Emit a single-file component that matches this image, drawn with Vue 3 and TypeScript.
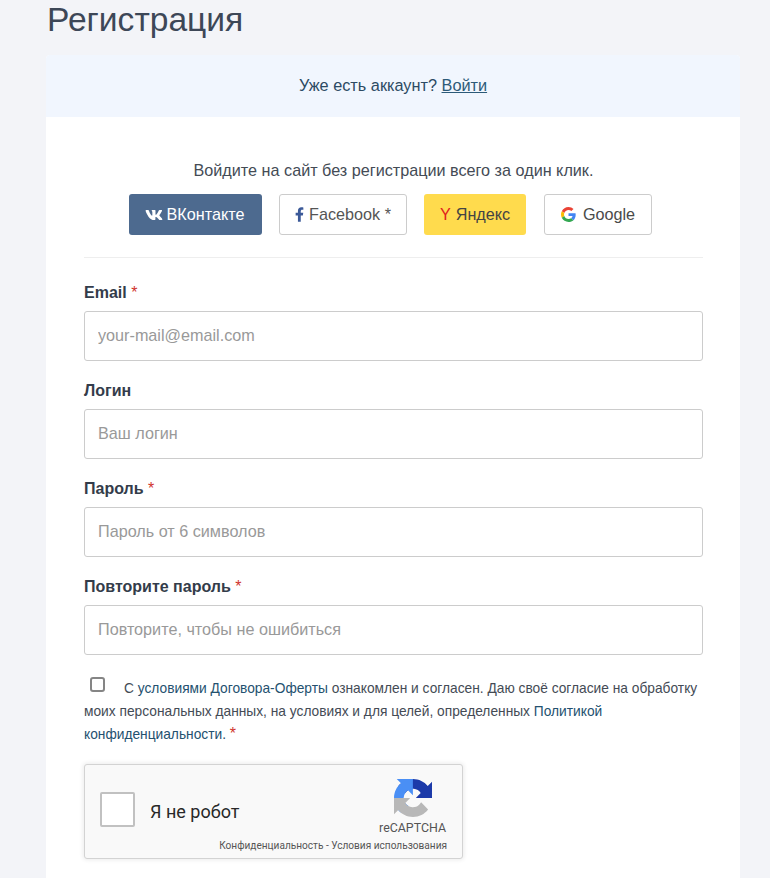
<script setup lang="ts">
interface Field {
  label: string;
  placeholder: string;
  required: boolean;
}

const fields: Field[] = [
  { label: "Email", placeholder: "your-mail@email.com", required: true },
  { label: "Логин", placeholder: "Ваш логин", required: false },
  { label: "Пароль", placeholder: "Пароль от 6 символов", required: true },
  { label: "Повторите пароль", placeholder: "Повторите, чтобы не ошибиться", required: true },
];
</script>

<template>
  <main class="page">
    <h1 class="title">Регистрация</h1>
    <section class="card">
      <header class="notice">Уже есть аккаунт? <a href="#" class="login">Войти</a></header>
      <div class="body">
        <p class="social-lead">Войдите на сайт без регистрации всего за один клик.</p>
        <div class="social">
          <a href="#" class="btn btn-vk">
            <svg class="ico-vk" viewBox="0 0 576 512" aria-hidden="true"><path fill="#fff" d="M545 117.7c3.7-12.5 0-21.7-17.8-21.7h-58.9c-15 0-21.9 7.9-25.6 18.9 0 0-29.4 68.8-71 113.3-13.4 13.4-19.6 17.7-26.9 17.7-3.7 0-9.2-4.3-9.2-16.8V117.7c0-15-4.2-21.7-16.6-21.7h-92.6c-9.4 0-15 7-15 13.5 0 14.2 21.2 17.5 23.4 57.5v86.8c0 19-3.4 22.5-10.9 22.5-20 0-68.6-73.4-97.4-157.4-5.8-16.3-11.5-22.9-26.6-22.9H38.8c-16.8 0-20.2 7.9-20.2 16.7 0 15.6 20 93.1 93.1 195.5C160.4 378.1 229 416 291.4 416c37.5 0 42.1-8.4 42.1-22.9 0-66.8-3.4-73.1 15.4-73.1 8.7 0 23.7 4.4 58.7 38.1 40 40 46.6 57.9 69 57.9h58.9c16.8 0 25.3-8.4 20.4-25-11.2-34.9-86.9-106.7-90.3-111.5-8.7-11.2-6.2-16.2 0-26.2.1-.1 72-101.3 79.4-135.6z"/></svg>
            <span>ВКонтакте</span>
          </a>
          <a href="#" class="btn btn-line btn-fb">
            <svg class="ico-fb" viewBox="0 0 320 512" aria-hidden="true"><path fill="#3b5998" d="M279.14 288l14.22-92.66h-88.91v-60.13c0-25.35 12.42-50.06 52.24-50.06h40.42V6.26S260.43 0 225.36 0c-73.22 0-121.08 44.38-121.08 124.72v70.62H22.89V288h81.39v224h100.17V288z"/></svg>
            <span>Facebook *</span>
          </a>
          <a href="#" class="btn btn-ya"><span class="ya-y">Y</span><span>Яндекс</span></a>
          <a href="#" class="btn btn-line btn-google">
            <svg class="ico-g" viewBox="0 0 48 48" aria-hidden="true">
              <path fill="#EA4335" d="M24 9.5c3.54 0 6.71 1.22 9.21 3.6l6.85-6.85C35.9 2.38 30.47 0 24 0 14.62 0 6.51 5.38 2.56 13.22l7.98 6.19C12.43 13.72 17.74 9.5 24 9.5z"/>
              <path fill="#4285F4" d="M46.98 24.55c0-1.57-.15-3.09-.38-4.55H24v9.02h12.94c-.58 2.96-2.26 5.48-4.78 7.18l7.73 6c4.51-4.18 7.09-10.36 7.09-17.65z"/>
              <path fill="#FBBC05" d="M10.53 28.59c-.48-1.45-.76-2.99-.76-4.59s.27-3.14.76-4.59l-7.98-6.19C.92 16.46 0 20.12 0 24c0 3.88.92 7.54 2.56 10.78l7.97-6.19z"/>
              <path fill="#34A853" d="M24 48c6.48 0 11.93-2.13 15.89-5.81l-7.73-6c-2.15 1.45-4.92 2.3-8.16 2.3-6.26 0-11.57-4.22-13.47-9.91l-7.98 6.19C6.51 42.62 14.62 48 24 48z"/>
            </svg>
            <span>Google</span>
          </a>
        </div>
        <hr class="divider" />

        <form class="form" @submit.prevent>
          <div v-for="field in fields" :key="field.label" class="field">
            <label class="label">{{ field.label }}<span v-if="field.required" class="req"> *</span></label>
            <input class="input" type="text" :placeholder="field.placeholder" />
          </div>

          <div class="consent">
            <span class="check"></span>С <a href="#" class="link">условиями Договора-Оферты</a> ознакомлен и согласен. Даю своё согласие на обработку моих персональных данных, на условиях и для целей, определенных <a href="#" class="link">Политикой конфиденциальности.</a> <span class="req req-big">*</span>
          </div>

          <div class="captcha">
            <span class="captcha-box"></span>
            <span class="captcha-text">Я не робот</span>
            <div class="captcha-brand">
              <svg class="captcha-logo" viewBox="0 0 64 64" aria-hidden="true">
                <path fill="#1c3aa9" d="M64 31.955l-.033-1.37V4.687l-7.16 7.16C50.948 4.674 42.033.093 32.05.093c-10.4 0-19.622 4.96-25.458 12.64l11.736 11.86a15.55 15.55 0 0 1 4.754-5.334c2.05-1.6 4.952-2.906 8.968-2.906.485 0 .86.057 1.135.163 4.976.393 9.288 3.14 11.828 7.124l-8.307 8.307c10.522-.04 22.4-.066 27.295 0"/>
                <path fill="#4a8ff5" d="M31.862 0l-1.37.033H4.6l7.16 7.16C4.6 13.06.02 21.97.02 31.95c0 10.4 4.96 19.622 12.64 25.458L24.5 45.67a15.55 15.55 0 0 1-5.334-4.754c-1.6-2.05-2.906-4.952-2.906-8.968 0-.485.057-.86.163-1.135.393-4.976 3.14-9.288 7.124-11.828l8.307 8.307c-.04-10.522-.066-22.4 0-27.295"/>
                <path fill="#b8b8b8" d="M.002 32l.033 1.37v25.898l7.16-7.16c5.86 7.173 14.775 11.754 24.757 11.754 10.4 0 19.622-4.96 25.458-12.64L45.674 39.36a15.55 15.55 0 0 1-4.754 5.334c-2.05 1.6-4.952 2.906-8.968 2.906-.485 0-.86-.057-1.135-.163-4.976-.393-9.288-3.14-11.828-7.124l8.307-8.307c-10.522.04-22.4.066-27.295 0"/>
              </svg>
              <span class="captcha-name">reCAPTCHA</span>
            </div>
            <div class="captcha-terms">Конфиденциальность - Условия использования</div>
          </div>
        </form>
      </div>
    </section>
  </main>
</template>

<style>
html, body { margin: 0; background: #f3f4f8; overflow: hidden; }
</style>

<style scoped>
.page {
  height: 878px;
  overflow: hidden;
  padding: 0 30px 0 46px;
  box-sizing: border-box;
  background: #f3f4f8;
  font-family: "Liberation Sans", Arial, sans-serif;
  color: #3a4350;
}
.title {
  margin: 0 0 0 1px;
  padding: 0;
  height: 55px;
  font-size: 33.6px;
  line-height: 39px;
  font-weight: 400;
  color: #3d4757;
}
.card {
  background: #fff;
  border-radius: 4px 4px 0 0;
}
.notice {
  height: 62px;
  background: #f1f6fe;
  border-radius: 4px 4px 0 0;
  font-size: 16.3px;
  line-height: 61px;
  text-align: center;
  color: #2c4a63;
}
.login { color: #2c5a78; text-decoration: underline; }
.body { padding: 44px 37px 60px 38px; }
.social-lead {
  margin: 0 0 15px;
  font-size: 16.2px;
  line-height: 18px;
  text-align: center;
  color: #444b55;
}
.social { display: flex; justify-content: center; gap: 17px; margin-right: 6px; }
.btn {
  box-sizing: border-box;
  display: flex;
  align-items: center;
  justify-content: center;
  height: 41px;
  border-radius: 3px;
  font-size: 16.2px;
  text-decoration: none;
  white-space: nowrap;
}
.btn-vk { width: 133px; padding-right: 2px; background: #4d6a8f; color: #fff; gap: 4px; }
.btn-line { background: #fff; border: 1px solid #ccc; color: #555; }
.btn-fb { width: 128px; gap: 5px; }
.btn-ya { width: 102px; gap: 5px; background: #ffdb4d; color: #444; }
.ya-y { color: #e11d1d; }
.btn-google { width: 108px; gap: 7px; margin-left: 1px; color: #4a4a4a; }
.ico-vk { width: 18px; height: 16px; }
.ico-fb { width: 9px; height: 15px; }
.ico-g { width: 15px; height: 15px; }
.divider {
  margin: 22px 0 0;
  border: 0;
  border-top: 1px solid #eeeeee;
}
.form { padding-top: 26px; }
.field { margin-bottom: 21px; }
.label {
  display: block;
  height: 18px;
  margin-bottom: 9px;
  font-size: 16px;
  line-height: 18px;
  font-weight: 700;
  color: #333c4a;
}
.req { color: #d0342c; font-weight: 400; }
.req-big { font-size: 16px; line-height: 1; }
.input {
  display: block;
  box-sizing: border-box;
  width: 100%;
  height: 50px;
  padding: 0 13px 1px;
  border: 1px solid #cccccc;
  border-radius: 3px;
  background: #fff;
  font-family: inherit;
  font-size: 16.2px;
  color: #333;
  outline: none;
}
.input::placeholder { color: #999; opacity: 1; }
.consent {
  margin-top: -10px;
  padding-top: 11px;
  font-size: 13.75px;
  line-height: 23px;
  color: #444b55;
}
.check {
  display: inline-block;
  box-sizing: border-box;
  width: 15px;
  height: 15px;
  margin: 0 19px 0 6px;
  border: 2px solid #858585;
  border-radius: 3px;
  background: #fff;
  vertical-align: 1px;
}
.link { color: #24516f; text-decoration: none; }
.captcha {
  position: relative;
  box-sizing: border-box;
  width: 379px;
  height: 95px;
  margin-top: 18px;
  display: flex;
  align-items: flex-start;
  border: 1px solid #d3d3d3;
  border-radius: 3px;
  background: #f9f9f9;
  box-shadow: 0 0 4px 1px rgba(0, 0, 0, 0.08);
  font-family: Roboto, "Liberation Sans", sans-serif;
}
.captcha-box {
  box-sizing: border-box;
  width: 35px;
  height: 35px;
  margin: 27px 0 0 15px;
  border: 2px solid #c1c1c1;
  border-radius: 2px;
  background: #fff;
}
.captcha-text {
  margin: 36px 0 0 15px;
  font-size: 18px;
  line-height: 22px;
  color: #282828;
}
.captcha-brand {
  position: absolute;
  top: 14px;
  right: 16px;
  display: flex;
  flex-direction: column;
  align-items: center;
}
.captcha-logo { width: 38px; height: 38px; margin-bottom: 4px; }
.captcha-name { font-size: 12.4px; line-height: 14px; color: #555; }
.captcha-terms {
  position: absolute;
  right: 15px;
  bottom: 6px;
  font-size: 10.1px;
  line-height: 12px;
  color: #555;
  white-space: nowrap;
}
</style>
